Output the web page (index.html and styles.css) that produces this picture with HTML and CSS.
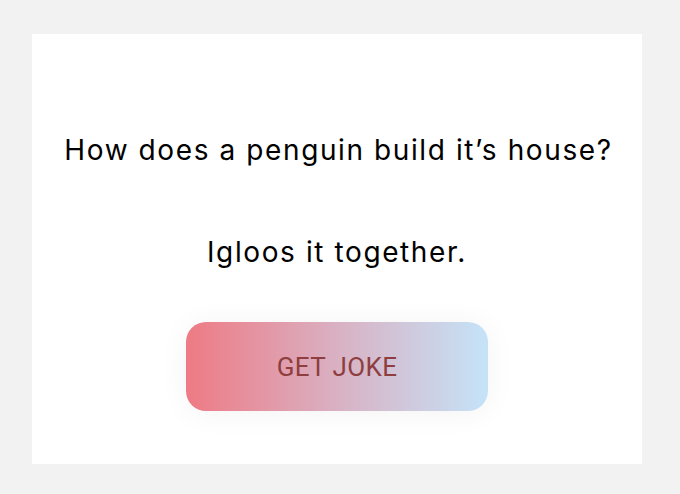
FILE: index.html
```html
<!DOCTYPE html>
<html>
<head>
<meta charset="utf-8">
<link rel="stylesheet" href="styles.css">
</head>
<body>
<main class="card">
  <p class="setup">How does a penguin build it’s house?</p>
  <p class="punchline">Igloos it together.</p>
  <button class="btn">GET JOKE</button>
</main>
</body>
</html>
```
FILE: styles.css
```css
html, body {
  margin: 0;
  padding: 0;
}
body {
  background: #f2f2f2;
  font-family: Inter, "Noto Sans", sans-serif;
  padding: 34px 38px 30px 32px;
}
.card {
  width: 610px;
  height: 430px;
  box-sizing: border-box;
  background: #ffffff;
  display: flex;
  flex-direction: column;
  align-items: center;
  padding-top: 98px;
}
.setup,
.punchline {
  margin: 0;
  font-size: 28px;
  line-height: 36px;
  letter-spacing: 1.6px;
  color: #000;
  white-space: nowrap;
}
.setup {
  padding-left: 3px;
}
.punchline {
  margin-top: 66px;
}
.btn {
  margin-top: 52px;
  width: 302px;
  height: 89px;
  border: none;
  border-radius: 20px;
  background: linear-gradient(90deg, #ee7a84 0%, #d9b1c3 50%, #c5e3f8 100%);
  color: #8e3e3e;
  font-family: Roboto, sans-serif;
  font-size: 26px;
  letter-spacing: 0.4px;
  box-shadow: 0 2px 30px rgba(0, 0, 0, 0.05);
}
```
